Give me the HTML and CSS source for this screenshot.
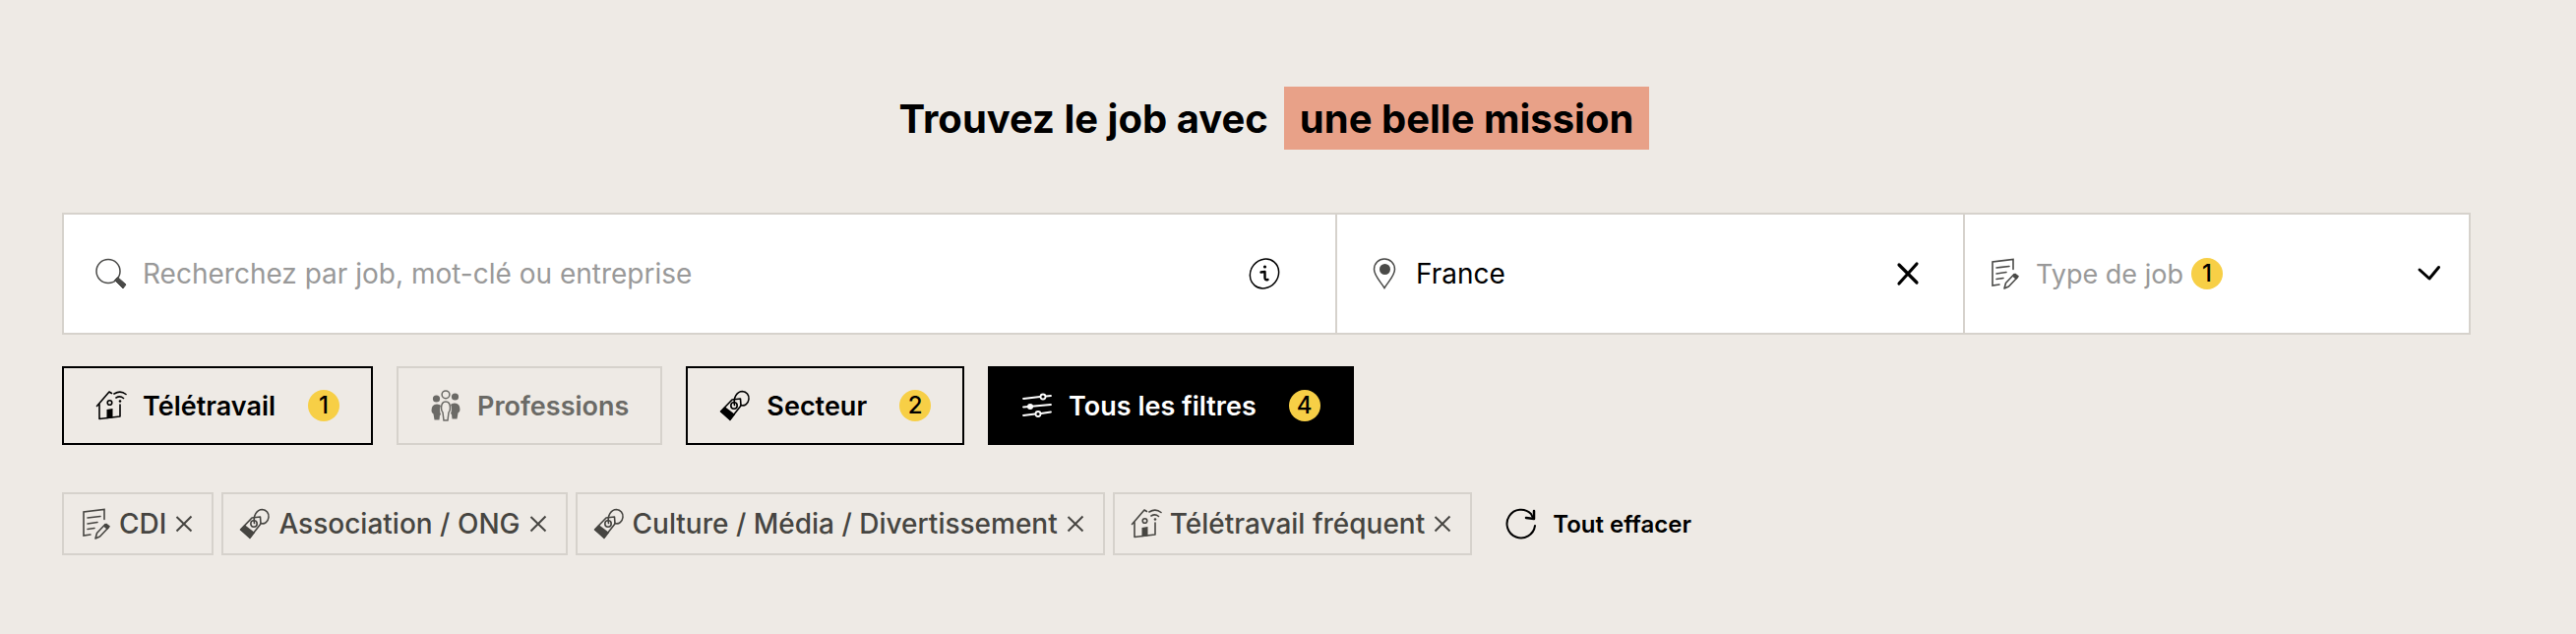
FILE: index.html
```html
<!DOCTYPE html>
<html lang="fr">
<head>
  <meta charset="UTF-8" />
  <meta name="viewport" content="width=device-width, initial-scale=1" />
  <title>Trouvez le job avec une belle mission</title>
  <link rel="stylesheet" href="styles.css">
</head>
<body>
  <!-- ICONS -->
  <svg class="sprite" aria-hidden="true">
    <symbol id="i-search" viewBox="0 0 32 32">
      <circle cx="13" cy="13.5" r="12" fill="none" stroke="currentColor" stroke-width="1.5"/>
      <path d="M19.5 22.5l3-3 8.5 7.5-3 4z" fill="currentColor" stroke="currentColor" stroke-linejoin="round"/>
    </symbol>
    <symbol id="i-info" viewBox="0 0 32 32">
      <ellipse cx="16" cy="16" rx="14" ry="15.5" transform="rotate(40 16 16)" fill="none" stroke="currentColor" stroke-width="1.5"/>
      <path d="M12.5 14.5l4-.5v6q0 3 3 2" fill="none" stroke="currentColor" stroke-width="2.4" stroke-linecap="round" stroke-linejoin="round"/>
      <circle cx="16.5" cy="9" r="1.6" fill="currentColor"/>
    </symbol>
    <symbol id="i-pin" viewBox="0 0 32 32">
      <path d="M16 30.5C12 24 5.5 18 5.5 11.5a10.5 10.5 0 0 1 21 0c0 6.5-6.5 12.5-10.5 19z" fill="none" stroke="currentColor" stroke-width="1.5"/>
      <circle cx="16.5" cy="11.5" r="5.5" fill="currentColor"/>
    </symbol>
    <symbol id="i-doc" viewBox="0 0 32 32">
      <path d="M11 27l-7 1V4l21-2.5v10M8 10l13-1.5M8 16l10-1.5M8 21.5l7-1" fill="none" stroke="currentColor" stroke-width="1.6" stroke-linecap="round"/>
      <path d="M16 31l1.5-5.5 8.5-9 3.5 3-9 9.5z" fill="none" stroke="currentColor" stroke-width="1.6" stroke-linejoin="round"/>
      <path d="M24 18.500l3-3 4 3-3 3.500z" fill="currentColor"/>
    </symbol>
    <symbol id="i-house" viewBox="0 0 32 32">
      <path d="M1.5 16.5L14 2l2.5 1.5M4 14.5V29.5l21-2.5V15" fill="none" stroke="currentColor" stroke-width="1.6" stroke-linecap="round" stroke-linejoin="round"/>
      <circle cx="14.5" cy="13" r="2.3" fill="none" stroke="currentColor" stroke-width="1.6"/>
      <path d="M11.5 20l6-1v9.500l-6 .8z" fill="currentColor"/>
      <path d="M19 4q6.500-4 12 .5M21 8q4-2.500 7.500.5" fill="none" stroke="currentColor" stroke-width="1.6" stroke-linecap="round"/>
      <circle cx="25" cy="11.5" r="1.3" fill="currentColor"/>
    </symbol>
    <symbol id="i-people" viewBox="0 0 32 32">
      <circle cx="6.5" cy="9" r="3.6" fill="currentColor"/>
      <circle cx="25.5" cy="7" r="3.6" fill="currentColor"/>
      <circle cx="16" cy="4.8" r="3.9" fill="none" stroke="currentColor" stroke-width="1.5"/>
      <path d="M1.500 21q0-6.500 5.500-6.500 3 0 4 1.500-2 4 0 9l-1 1-.5 4.500H4.500l-1-6q-2-.5-2-3.500zM30.500 20q0-6.500-5.500-6.500-3 0-4 1.500 2 4 0 9l1 1 .5 4.500h5l1-6q2-.5 2-3.500z" fill="currentColor"/>
      <path d="M11.500 18.500q0-6.500 4.500-6.500t4.500 6.500q0 3-1.500 4.500l-1 8h-4l-1-8q-1.500-1.500-1.500-4.500z" fill="none" stroke="currentColor" stroke-width="1.5"/>
    </symbol>
    <symbol id="i-tag" viewBox="0 0 32 32">
      <path d="M1.5 22L13 10l8.5-1 .5 7L11 30z" fill="none" stroke="currentColor" stroke-width="1.6" stroke-linejoin="round"/>
      <path d="M1 22l4.500-5 10.500 8-5 6.500z" fill="currentColor"/>
      <circle cx="15" cy="16" r="3.2" fill="none" stroke="currentColor" stroke-width="1.6"/>
      <path d="M15.5 15.5C14 8 18 1.500 23.500 1.500a7 7 0 0 1 6.500 8c-.5 4-4 7.500-8 6" fill="none" stroke="currentColor" stroke-width="1.6" stroke-linecap="round"/>
    </symbol>
    <symbol id="i-sliders" viewBox="0 0 32 32">
      <path d="M2 9l17-2M25 6.500l5-.5M2 17.500l28-2.500M2 26l12-1.500M20 24l10-1.500" fill="none" stroke="currentColor" stroke-width="1.8" stroke-linecap="round"/>
      <circle cx="22" cy="7" r="2.5" fill="none" stroke="currentColor" stroke-width="1.8"/>
      <circle cx="9" cy="17" r="3" fill="currentColor"/>
      <circle cx="17" cy="24.5" r="2.5" fill="none" stroke="currentColor" stroke-width="1.8"/>
    </symbol>
    <symbol id="i-cross" viewBox="0 0 32 32">
      <path d="M7 7l18 18M25 6L7 26" fill="none" stroke="currentColor" stroke-width="3.2" stroke-linecap="round"/>
    </symbol>
    <symbol id="i-remove" viewBox="0 0 20 20">
      <path d="M2.500 3l15 14.500M17.500 2.500L2.500 17.500" fill="none" stroke="currentColor" stroke-width="2"/>
    </symbol>
    <symbol id="i-chevron" viewBox="0 0 32 32">
      <path d="M6 12l10 9 9.500-11.500" fill="none" stroke="currentColor" stroke-width="3" stroke-linecap="round" stroke-linejoin="round"/>
    </symbol>
    <symbol id="i-reload" viewBox="0 0 32 32">
      <path d="M30 18A14.3 14.3 0 1 1 26 6l2 4" fill="none" stroke="currentColor" stroke-width="2" stroke-linecap="round"/>
      <path d="M29 3v8l-8-1" fill="none" stroke="currentColor" stroke-width="2.5" stroke-linecap="round" stroke-linejoin="round"/>
    </symbol>
  </svg>

  <main class="search">
    <h1 class="search-title"><span class="lead">Trouvez le job avec</span> <span class="lead highlight">une belle mission</span></h1>

    <form class="search-bar">
      <div class="field field-job">
        <svg class="icon"><use href="#i-search"/></svg>
        <input class="field-input" type="text" aria-label="Job" placeholder="Recherchez par job, mot-clé ou entreprise">
        <button class="icon-btn" type="button" aria-label="Informations"><svg class="icon dark"><use href="#i-info"/></svg></button>
      </div>
      <div class="field field-place">
        <svg class="icon"><use href="#i-pin"/></svg>
        <input class="field-input" type="text" aria-label="Lieu" value="France">
        <button class="icon-btn" type="button" aria-label="Effacer le lieu"><svg class="icon dark"><use href="#i-cross"/></svg></button>
      </div>
      <button class="field field-type" type="button">
        <svg class="icon"><use href="#i-doc"/></svg>
        <span class="field-label">Type de job <span class="count">1</span></span>
        <svg class="icon dark"><use href="#i-chevron"/></svg>
      </button>
    </form>

    <div class="filters">
      <button class="filter active" type="button"><svg class="icon"><use href="#i-house"/></svg>Télétravail<span class="count">1</span></button>
      <button class="filter" type="button"><svg class="icon"><use href="#i-people"/></svg>Professions</button>
      <button class="filter active" type="button"><svg class="icon"><use href="#i-tag"/></svg>Secteur<span class="count">2</span></button>
      <button class="filter all" type="button"><svg class="icon"><use href="#i-sliders"/></svg>Tous les filtres<span class="count">4</span></button>
    </div>

    <div class="chips">
      <button class="chip" type="button"><svg class="icon"><use href="#i-doc"/></svg>CDI<svg class="remove"><use href="#i-remove"/></svg></button>
      <button class="chip" type="button"><svg class="icon"><use href="#i-tag"/></svg>Association / ONG<svg class="remove"><use href="#i-remove"/></svg></button>
      <button class="chip" type="button"><svg class="icon"><use href="#i-tag"/></svg>Culture / Média / Divertissement<svg class="remove"><use href="#i-remove"/></svg></button>
      <button class="chip" type="button"><svg class="icon"><use href="#i-house"/></svg>Télétravail fréquent<svg class="remove"><use href="#i-remove"/></svg></button>
      <button class="clear" type="button"><svg class="icon"><use href="#i-reload"/></svg>Tout effacer</button>
    </div>
  </main>
</body>
</html>
```
FILE: styles.css
```css
* {
  box-sizing: border-box;
}

body {
  margin: 0;
  background-color: #eeeae5;
  color: #000;
  font-family: "Inter", "Liberation Sans", sans-serif;
  font-size: 28px;
}

button,
input {
  font: inherit;
  color: inherit;
  background: none;
  border: 0;
  padding: 0;
}

button {
  cursor: pointer;
}

.sprite {
  display: none;
}

.search {
  padding: 88px 107px 80px 63px;
}

.search-title {
  display: flex;
  justify-content: center;
  gap: 16px;
  margin: 0 0 64px;
  padding-left: 16px;
  font-size: 40px;
  line-height: 62px;
  font-weight: 700;
}

.lead {
  padding-top: 2px;
}

.highlight {
  padding-left: 16px;
  padding-right: 16px;
  background-color: #e8a188;
}

.icon {
  flex: none;
  width: 32px;
  height: 32px;
}

.dark {
  color: #000;
}

/* SEARCH BAR */
.search-bar {
  display: grid;
  grid-template-columns: 1292fr 638fr 514fr;
  height: 124px;
  background-color: #fff;
  border: 2px solid #d6d2cc;
}

.field {
  display: flex;
  align-items: center;
  gap: 16px;
  min-width: 0;
  padding: 0 56px 0 32px;
  color: #4a4a48;
}

.field + .field {
  border-left: 2px solid #d6d2cc;
}

.field-place {
  padding-right: 40px;
}

.field-type {
  padding: 0 24px;
  font-size: 27px;
}

.field-input,
.field-label {
  flex: 1;
  min-width: 0;
}

.field-input {
  height: 64px;
  color: #000;
  outline: 0;
}

.field-input::placeholder {
  color: #999;
  opacity: 1;
}

.field-label {
  display: flex;
  align-items: center;
  gap: 8px;
  color: #999;
}

.icon-btn {
  display: flex;
}

.count {
  width: 32px;
  height: 32px;
  border-radius: 50%;
  background-color: #f7cf46;
  color: #000;
  font-size: 24px;
  font-weight: 500;
  line-height: 32px;
  text-align: center;
}

/* FILTERS */
.filters {
  display: flex;
  gap: 24px;
  margin-top: 32px;
}

.filter {
  display: flex;
  align-items: center;
  gap: 16px;
  height: 80px;
  padding: 0 32px;
  border: 2px solid #d6d2cc;
  color: #6b6a66;
  font-size: 27px;
  font-weight: 600;
}

.filter .count {
  margin-left: 17px;
}

.filter.active {
  border-color: #000;
  color: #000;
}

.filter.all {
  border-color: #000;
  background-color: #000;
  color: #fff;
}

/* SELECTED FILTERS */
.chips {
  display: flex;
  gap: 8px;
  margin-top: 48px;
}

.chip {
  display: flex;
  align-items: center;
  gap: 8px;
  height: 64px;
  padding: 0 18px 0 16px;
  border: 2px solid #d6d2cc;
  color: #464541;
  font-weight: 500;
}

.remove {
  width: 20px;
  height: 20px;
}

.clear {
  display: flex;
  align-items: center;
  gap: 16px;
  margin-left: 26px;
  font-size: 24px;
  font-weight: 600;
}
```
